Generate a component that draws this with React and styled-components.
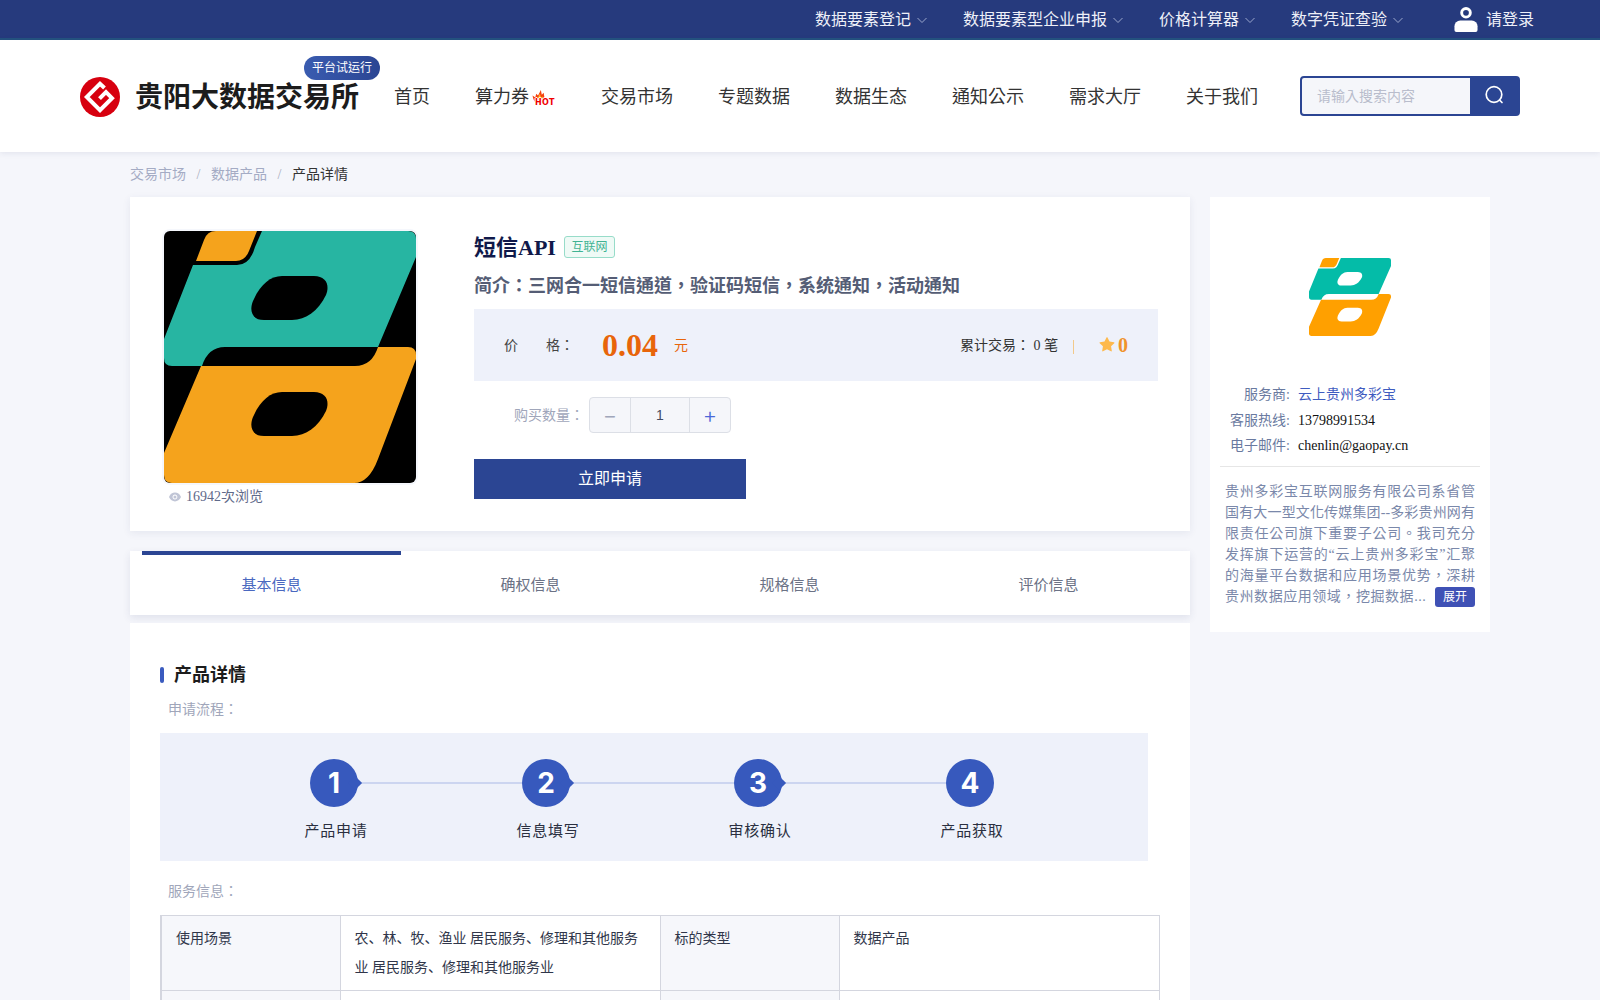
import styled, { createGlobalStyle } from 'styled-components'
import { AiFillEye, AiFillStar } from 'react-icons/ai'

const GlobalStyle = createGlobalStyle`
  * { box-sizing: border-box; }
  html, body { margin: 0; height: 100%; overflow: hidden; }
  body {
    background: #f5f6fb;
    font-family: "Liberation Serif", "Noto Sans CJK TC", serif;
    font-size: 14px;
    line-height: 1.2;
    color: #30364a;
  }
`

const TopBar = styled.div`
  height: 40px;
  padding-right: 66px;
  display: flex;
  justify-content: flex-end;
  align-items: center;
  gap: 36px;
  background: #263a7d;
  border-bottom: 2px solid #24527f;
  color: #fff;
  font-size: 16px;
`
const TopLink = styled.div`
  display: flex;
  align-items: center;
  gap: 6px;
  padding-top: 2px;
  color: #eef0f8;
`
const LoginLink = styled.div`
  display: flex;
  align-items: center;
  gap: 8px;
  margin-left: 15px;
  color: #eef0f8;
  span { padding-top: 2px; }
`

const Header = styled.header`
  position: relative;
  height: 112px;
  padding: 0 80px;
  display: flex;
  align-items: center;
  background: #fff;
  box-shadow: 0 1px 6px rgba(40, 50, 100, 0.1);
`
const Brand = styled.div`
  position: relative;
  display: flex;
  align-items: center;
  gap: 15px;
  margin-right: 35px;
  svg { margin-top: 2px; }
`
const BrandName = styled.div`
  padding-top: 3px;
  font-size: 28px;
  font-weight: 700;
  color: #1c1c1c;
  white-space: nowrap;
`
const TrialBadge = styled.div`
  position: absolute;
  left: 224px;
  top: -19px;
  width: 76px;
  height: 24px;
  border-radius: 12px;
  background: linear-gradient(90deg, #3a5cb0, #2b4593);
  color: #fff;
  font-size: 12px;
  line-height: 24px;
  text-align: center;
  white-space: nowrap;
`
const MainNav = styled.nav`
  display: flex;
  gap: 45px;
  padding-top: 3px;
  font-size: 18px;
  color: #333;
`
const NavItem = styled.div`
  display: flex;
  white-space: nowrap;
`
const HotMark = styled.span`
  position: relative;
  display: block;
  width: 27px;
  height: 22px;
`
const HotFlame = styled.span`
  position: absolute;
  left: 2px;
  top: 3px;
  display: block;
  line-height: 0;
`
const HotText = styled.span`
  position: absolute;
  left: 6px;
  top: 12px;
  font-family: "DejaVu Sans", sans-serif;
  font-size: 8px;
  line-height: 8px;
  font-weight: 900;
  letter-spacing: 0.2px;
  color: #f00000;
  text-shadow: 0 -1px 0 #fff, 1px 0 0 #fff, -1px 0 0 #fff;
`
const SearchBox = styled.div`
  width: 220px;
  height: 40px;
  margin-left: 42px;
  display: flex;
  border: 2px solid #2b4593;
  border-radius: 4px;
  background: #2b4593;
  overflow: hidden;
`
const SearchField = styled.div`
  flex: 1;
  padding-left: 15px;
  background: #f5f6fa;
  color: #b9bdcc;
  line-height: 37px;
`
const SearchButton = styled.div`
  width: 48px;
  padding-bottom: 3px;
  display: flex;
  align-items: center;
  justify-content: center;
`

const Breadcrumb = styled.div`
  width: 1360px;
  height: 45px;
  margin-left: 130px;
  padding-top: 2px;
  display: flex;
  align-items: center;
  color: #a4abc4;
`
const CrumbSep = styled.span`
  width: 25px;
  text-align: center;
  color: #a9aec0;
`
const CrumbCurrent = styled.span`
  color: #333;
`

const Layout = styled.div`
  width: 1360px;
  margin-left: 130px;
  display: flex;
  align-items: flex-start;
  gap: 20px;
`
const MainColumn = styled.main`
  width: 1060px;
`
const SideCard = styled.aside`
  width: 280px;
  padding: 61px 10px 25px;
  background: #fff;
`

const ProductCard = styled.section`
  height: 334px;
  padding: 32px;
  display: flex;
  gap: 56px;
  background: #fff;
  box-shadow: 0 2px 8px rgba(40, 50, 100, 0.08);
`
const Gallery = styled.div`
  width: 256px;
`
const Cover = styled.div`
  height: 256px;
  border: 2px solid #f5f7fc;
  border-radius: 8px;
  overflow: hidden;
  svg { display: block; width: 100%; height: 100%; }
`
const Views = styled.div`
  height: 24px;
  padding-left: 6px;
  display: flex;
  align-items: center;
  gap: 4px;
  color: #5f6a8a;
`
const Summary = styled.div`
  flex: 1;
  padding-top: 3px;
`
const TitleRow = styled.div`
  height: 30px;
  display: flex;
  align-items: center;
  gap: 8px;
`
const ProductTitle = styled.h1`
  margin: 0;
  padding-top: 2px;
  font-size: 22px;
  font-weight: 700;
  color: #10194a;
`
const IndustryTag = styled.span`
  width: 51px;
  height: 22px;
  border: 1px solid #97dcc9;
  border-radius: 3px;
  background: #effaf6;
  color: #3fb393;
  font-size: 12px;
  line-height: 20px;
  text-align: center;
`
const Intro = styled.div`
  height: 30px;
  margin-top: 9px;
  font-size: 18px;
  font-weight: 700;
  line-height: 30px;
  color: #555d75;
`
const PriceBand = styled.div`
  height: 72px;
  margin-top: 8px;
  padding: 0 30px;
  display: flex;
  align-items: center;
  background: #eef1fa;
`
const PriceLabel = styled.div`
  width: 98px;
  padding-top: 2px;
  display: flex;
  gap: 28px;
  color: #444;
`
const PriceValue = styled.div`
  font-size: 32px;
  font-weight: 700;
  color: #e8650a;
`
const PriceUnit = styled.div`
  margin-left: 16px;
  padding-top: 2px;
  color: #e8650a;
`
const TradeCount = styled.div`
  margin-left: auto;
  padding-top: 2px;
  color: #333;
  white-space: pre;
`
const TradeSep = styled.span`
  width: 1px;
  height: 14px;
  margin: 4px 24px 0 15px;
  background: #f2c98a;
`
const Rating = styled.div`
  display: flex;
  align-items: center;
  gap: 2px;
  font-size: 20px;
  font-weight: 700;
  color: #f0932b;
  svg { color: #fdb94d; }
`
const QuantityRow = styled.div`
  margin-top: 16px;
  padding-left: 40px;
  display: flex;
  align-items: center;
  gap: 5px;
  color: #a0a6ba;
`
const QuantityLabel = styled.span`
  padding-top: 2px;
`
const Stepper = styled.div`
  width: 142px;
  height: 36px;
  display: flex;
  border: 1px solid #dcdfe6;
  border-radius: 4px;
  background: #f5f6fa;
  color: #444b62;
`
const StepperButton = styled.div`
  width: 40px;
  display: flex;
  align-items: center;
  justify-content: center;
  font-family: Inter, sans-serif;
  font-size: 22px;
  font-weight: 300;
  color: ${(p) => p.$tone};
`
const StepperValue = styled.div`
  flex: 1;
  border-left: 1px solid #dcdfe6;
  border-right: 1px solid #dcdfe6;
  font-family: "Liberation Sans", sans-serif;
  line-height: 34px;
  text-align: center;
`
const ApplyButton = styled.div`
  width: 272px;
  height: 40px;
  margin-top: 26px;
  background: #2b4593;
  color: #fff;
  font-size: 16px;
  line-height: 40px;
  text-align: center;
`

const TabBar = styled.div`
  height: 64px;
  margin-top: 20px;
  padding: 0 12px;
  display: flex;
  background: #fff;
  box-shadow: 0 3px 8px rgba(40, 50, 100, 0.1);
`
const Tab = styled.div`
  flex: 1;
  border-top: 4px solid ${(p) => (p.$active ? '#2b4593' : 'transparent')};
  color: ${(p) => (p.$active ? '#4a68c0' : '#6b7285')};
  font-size: 15px;
  line-height: 60px;
  text-align: center;
`

const DetailCard = styled.section`
  margin-top: 8px;
  padding: 40px 30px 40px;
  background: #fff;
`
const SectionTitle = styled.h2`
  height: 24px;
  margin: 0;
  display: flex;
  align-items: center;
  gap: 10px;
  font-size: 18px;
  font-weight: 700;
  color: #1c1c1c;
  span { padding-top: 2px; }
  &::before {
    content: '';
    width: 4px;
    height: 16px;
    border-radius: 2px;
    background: #3a5bbf;
  }
`
const FieldHint = styled.div`
  height: 20px;
  margin-top: ${(p) => p.$top}px;
  padding-left: 8px;
  color: #a0a6ba;
  line-height: 20px;
`
const FlowBand = styled.div`
  width: 988px;
  height: 128px;
  margin-top: 13px;
  padding: 26px 0 0 150px;
  display: flex;
  background: #eef1fa;
`
const FlowStep = styled.div`
  flex: none;
  width: 212px;
`
const FlowHead = styled.div`
  display: flex;
  align-items: center;
`
const FlowCircle = styled.div`
  position: relative;
  flex: none;
  width: 48px;
  height: 48px;
  border-radius: 50%;
  background: #3759bd;
  color: #fff;
  font-family: Inter, sans-serif;
  font-size: 28px;
  font-weight: 700;
  line-height: 48px;
  text-align: center;
  &::after {
    content: '';
    display: ${(p) => (p.$last ? 'none' : 'block')};
    position: absolute;
    right: -2px;
    top: 19px;
    width: 10px;
    height: 10px;
    background: #3759bd;
    transform: rotate(45deg);
  }
`
const FlowLine = styled.div`
  flex: 1;
  height: 2px;
  background: #ccd5f0;
`
const FlowLabel = styled.div`
  width: 48px;
  margin: 13px 0 0 2px;
  display: flex;
  justify-content: center;
  font-family: "Noto Sans CJK SC", sans-serif;
  font-size: 15px;
  letter-spacing: 0.8px;
  line-height: 20px;
  white-space: nowrap;
  color: #2a2f40;
`

const InfoTable = styled.table`
  width: 998px;
  margin-top: 13px;
  border-collapse: collapse;
  border-left: 2px solid #d4d6df;
  table-layout: fixed;
  font-family: "Liberation Serif", "Noto Sans CJK SC", serif;
`
const LabelCell = styled.td`
  width: ${(p) => p.$w}px;
  padding: 8px 14px;
  border: 1px solid #d4d6df;
  background: #f6f7fb;
  line-height: 29px;
  vertical-align: top;
`
const ValueCell = styled.td`
  width: ${(p) => p.$w}px;
  padding: 8px 14px;
  border: 1px solid #d4d6df;
  line-height: 29px;
  vertical-align: top;
`

const SideLogo = styled.div`
  width: 82px;
  height: 78px;
  margin: 0 auto 46px;
  svg { display: block; width: 100%; height: 100%; }
`
const ContactRow = styled.div`
  height: 25.5px;
  padding-top: 2px;
  display: flex;
  align-items: center;
  gap: 8px;
`
const ContactLabel = styled.span`
  width: 70px;
  text-align: right;
  color: #6a7aa0;
  white-space: nowrap;
`
const ContactValue = styled.span`
  color: ${(p) => (p.$link ? '#3f5cc0' : '#111')};
`
const Divider = styled.div`
  height: 1px;
  margin: 7.5px 0 14px;
  background: #e6e6e6;
`
const Description = styled.div`
  padding: 0 5px;
  color: #7a88aa;
  line-height: 21px;
`
const DescLine = styled.div`
  text-align: justify;
  text-align-last: justify;
  white-space: nowrap;
`
const DescLast = styled.div`
  display: flex;
  align-items: center;
  justify-content: space-between;
  letter-spacing: 0.55px;
  white-space: nowrap;
`
const ExpandButton = styled.span`
  width: 40px;
  height: 20px;
  border-radius: 3px;
  background: #3f51b5;
  color: #fff;
  font-size: 12px;
  letter-spacing: 0;
  line-height: 20px;
  text-align: center;
`

const Chevron = () => (
  <svg width="10" height="10" viewBox="0 0 10 10" fill="none" stroke="#9aa6cc" strokeWidth="1">
    <path d="M0.5 3 L5 7.5 L9.5 3" />
  </svg>
)

const UserIcon = () => (
  <svg width="24" height="25" viewBox="0 0 24 26" fill="#fff">
    <path fillRule="evenodd" d="M12 0a6 6 0 1 1 0 12a6 6 0 0 1 0-12zm0 3a3 3 0 1 0 0 6a3 3 0 0 0 0-6z" />
    <path d="M6 14h12a6 6 0 0 1 6 6v4a2 2 0 0 1-2 2H2a2 2 0 0 1-2-2v-4a6 6 0 0 1 6-6z" />
  </svg>
)

const SearchIcon = () => (
  <svg width="22" height="22" viewBox="0 0 22 22" fill="none" stroke="#fff" strokeWidth="1.7" strokeLinecap="round">
    <circle cx="11" cy="10.5" r="7.8" />
    <path d="M16.5 16 L19 18.5" />
  </svg>
)

const ExchangeLogo = () => (
  <svg width="40" height="40" viewBox="0 0 40 40">
    <circle cx="20" cy="20" r="20" fill="#d7000f" />
    <path
      d="M24.5 11 L20 6.8 L6.8 20 L20 33.2 L32 21.2 L26 15.2 L19.5 21.7"
      fill="none"
      stroke="#fff"
      strokeWidth="4"
      strokeLinejoin="miter"
    />
  </svg>
)

const Flame = () => (
  <svg width="16" height="13" viewBox="0 0 16 14">
    <path d="M1 6 L4 8 L5 4 L7 6 L10 0 L11 5 L13 3 L14 9 L12 14 H5 Q2 12 1 6 Z" fill="#f5400c" />
    <path d="M5 9 L7 8 L9 4 L10 8 L12 7 L12 10 H6 Z" fill="#ffc02e" />
  </svg>
)

// teal + orange mark, used for the cover and the provider logo
const ProviderMark = ({ bg, teal, orange, radius }) => (
  <svg viewBox="0 0 252 252" preserveAspectRatio="none">
    {bg && <rect width="252" height="252" fill={bg} />}
    <path
      d={`M98 0 H${252 - radius} Q252 0 252 ${radius} V26 L214 116 H61 Q44 116 38 135 H8 Q0 135 0 127 V108 L29 34 H73 Q86 34 91 16 Z`}
      fill={teal}
    />
    <path d="M32 30 L40 9 Q43 0 52 0 H93 L85 20 Q81 30 72 30 Z" fill={orange} />
    <path
      d={`M214 116 H${252 - radius} Q252 116 252 ${116 + radius} V128 L214 228 Q205 252 190 252 H8 Q0 252 0 244 V222 L37 135 H191 Q208 135 214 116 Z`}
      fill={orange}
    />
    <path d="M118 45 H150 C162 45 166 54 162 64 C154 80 142 89 128 89 H100 C88 89 85 80 89 70 C96 54 106 45 118 45 Z" fill={bg || '#fff'} />
    <path d="M118 161 H150 C162 161 166 170 162 180 C154 196 142 205 128 205 H100 C88 205 85 196 89 186 C96 170 106 161 118 161 Z" fill={bg || '#fff'} />
  </svg>
)

const topLinks = ['数据要素登记', '数据要素型企业申报', '价格计算器', '数字凭证查验']
const navItems = ['首页', '算力券', '交易市场', '专题数据', '数据生态', '通知公示', '需求大厅', '关于我们']
const tabs = ['基本信息', '确权信息', '规格信息', '评价信息']
const steps = ['产品申请', '信息填写', '审核确认', '产品获取']
const descLines = [
  '贵州多彩宝互联网服务有限公司系省管',
  '国有大一型文化传媒集团--多彩贵州网有',
  '限责任公司旗下重要子公司。我司充分',
  '发挥旗下运营的“云上贵州多彩宝”汇聚',
  '的海量平台数据和应用场景优势，深耕',
]

export default function App() {
  return (
    <>
      <GlobalStyle />
      <TopBar>
        {topLinks.map((t) => (
          <TopLink key={t}>
            {t}
            <Chevron />
          </TopLink>
        ))}
        <LoginLink>
          <UserIcon />
          <span>请登录</span>
        </LoginLink>
      </TopBar>

      <Header>
        <Brand>
          <ExchangeLogo />
          <BrandName>贵阳大数据交易所</BrandName>
          <TrialBadge>平台试运行</TrialBadge>
        </Brand>
        <MainNav>
          {navItems.map((t) => (
            <NavItem key={t}>
              {t}
              {t === '算力券' && (
                <HotMark>
                  <HotFlame>
                    <Flame />
                  </HotFlame>
                  <HotText>HOT</HotText>
                </HotMark>
              )}
            </NavItem>
          ))}
        </MainNav>
        <SearchBox>
          <SearchField>请输入搜索内容</SearchField>
          <SearchButton>
            <SearchIcon />
          </SearchButton>
        </SearchBox>
      </Header>

      <Breadcrumb>
        交易市场
        <CrumbSep>/</CrumbSep>
        数据产品
        <CrumbSep>/</CrumbSep>
        <CrumbCurrent>产品详情</CrumbCurrent>
      </Breadcrumb>

      <Layout>
        <MainColumn>
          <ProductCard>
            <Gallery>
              <Cover>
                <ProviderMark bg="#000" teal="#27b5a2" orange="#f5a31c" radius={8} />
              </Cover>
              <Views>
                <AiFillEye size={14} color="#c0c5d6" />
                16942次浏览
              </Views>
            </Gallery>
            <Summary>
              <TitleRow>
                <ProductTitle>短信API</ProductTitle>
                <IndustryTag>互联网</IndustryTag>
              </TitleRow>
              <Intro>简介：三网合一短信通道，验证码短信，系统通知，活动通知</Intro>
              <PriceBand>
                <PriceLabel>
                  <span>价</span>
                  <span>格：</span>
                </PriceLabel>
                <PriceValue>0.04</PriceValue>
                <PriceUnit>元</PriceUnit>
                <TradeCount>累计交易： 0 笔</TradeCount>
                <TradeSep />
                <Rating>
                  <AiFillStar size={18} />
                  0
                </Rating>
              </PriceBand>
              <QuantityRow>
                <QuantityLabel>购买数量：</QuantityLabel>
                <Stepper>
                  <StepperButton $tone="#a0a6ba">−</StepperButton>
                  <StepperValue>1</StepperValue>
                  <StepperButton $tone="#4a68d8">+</StepperButton>
                </Stepper>
              </QuantityRow>
              <ApplyButton>立即申请</ApplyButton>
            </Summary>
          </ProductCard>

          <TabBar>
            {tabs.map((t, i) => (
              <Tab key={t} $active={i === 0}>
                {t}
              </Tab>
            ))}
          </TabBar>

          <DetailCard>
            <SectionTitle>
              <span>产品详情</span>
            </SectionTitle>
            <FieldHint $top={13}>申请流程：</FieldHint>
            <FlowBand>
              {steps.map((s, i) => (
                <FlowStep key={s}>
                  <FlowHead>
                    <FlowCircle $last={i === steps.length - 1}>{i + 1}</FlowCircle>
                    {i < steps.length - 1 && <FlowLine />}
                  </FlowHead>
                  <FlowLabel>{s}</FlowLabel>
                </FlowStep>
              ))}
            </FlowBand>
            <FieldHint $top={21}>服务信息：</FieldHint>
            <InfoTable>
              <tbody>
                <tr>
                  <LabelCell $w={179}>使用场景</LabelCell>
                  <ValueCell $w={320}>农、林、牧、渔业 居民服务、修理和其他服务业 居民服务、修理和其他服务业</ValueCell>
                  <LabelCell $w={179}>标的类型</LabelCell>
                  <ValueCell $w={320}>数据产品</ValueCell>
                </tr>
                <tr>
                  <LabelCell $w={179}>&nbsp;</LabelCell>
                  <ValueCell $w={320}>&nbsp;</ValueCell>
                  <LabelCell $w={179}>&nbsp;</LabelCell>
                  <ValueCell $w={320}>&nbsp;</ValueCell>
                </tr>
              </tbody>
            </InfoTable>
          </DetailCard>
        </MainColumn>

        <SideCard>
          <SideLogo>
            <ProviderMark teal="#04bca8" orange="#ffa000" radius={8} />
          </SideLogo>
          <ContactRow>
            <ContactLabel>服务商:</ContactLabel>
            <ContactValue $link>云上贵州多彩宝</ContactValue>
          </ContactRow>
          <ContactRow>
            <ContactLabel>客服热线:</ContactLabel>
            <ContactValue>13798991534</ContactValue>
          </ContactRow>
          <ContactRow>
            <ContactLabel>电子邮件:</ContactLabel>
            <ContactValue>chenlin@gaopay.cn</ContactValue>
          </ContactRow>
          <Divider />
          <Description>
            {descLines.map((l) => (
              <DescLine key={l}>{l}</DescLine>
            ))}
            <DescLast>
              贵州数据应用领域，挖掘数据...
              <ExpandButton>展开</ExpandButton>
            </DescLast>
          </Description>
        </SideCard>
      </Layout>
    </>
  )
}
